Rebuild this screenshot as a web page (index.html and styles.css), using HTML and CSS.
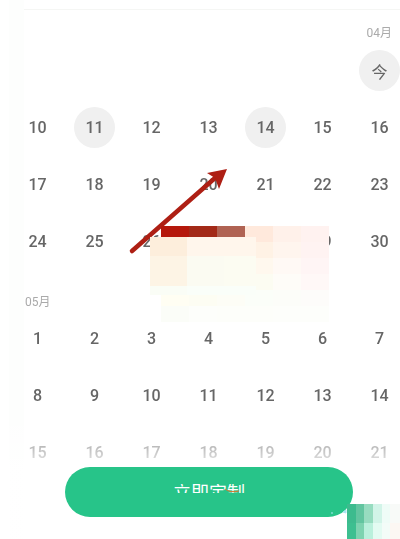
FILE: index.html
```html
<!DOCTYPE html>
<html lang="zh">
<head>
<meta charset="utf-8">
<title>日历</title>
<link rel="stylesheet" href="styles.css">
</head>
<body>
<div class="page">
  <div class="top-rule"></div>
  <section class="month april">
    <div class="month-label label-right">04月</div>
    <div class="days">
      <div class="day start-sun"><span class="mark today">今</span></div>
      <div class="day">10</div>
      <div class="day"><span class="mark">11</span></div>
      <div class="day">12</div>
      <div class="day">13</div>
      <div class="day"><span class="mark">14</span></div>
      <div class="day">15</div>
      <div class="day">16</div>
      <div class="day">17</div>
      <div class="day">18</div>
      <div class="day">19</div>
      <div class="day">20</div>
      <div class="day">21</div>
      <div class="day">22</div>
      <div class="day">23</div>
      <div class="day">24</div>
      <div class="day">25</div>
      <div class="day">26</div>
      <div class="day">27</div>
      <div class="day">28</div>
      <div class="day">29</div>
      <div class="day">30</div>
    </div>
  </section>
  <section class="month may">
    <div class="month-label">05月</div>
    <div class="days">
      <div class="day">1</div>
      <div class="day">2</div>
      <div class="day">3</div>
      <div class="day">4</div>
      <div class="day">5</div>
      <div class="day">6</div>
      <div class="day">7</div>
      <div class="day">8</div>
      <div class="day">9</div>
      <div class="day">10</div>
      <div class="day">11</div>
      <div class="day">12</div>
      <div class="day">13</div>
      <div class="day">14</div>
      <div class="day">15</div>
      <div class="day">16</div>
      <div class="day">17</div>
      <div class="day">18</div>
      <div class="day">19</div>
      <div class="day">20</div>
      <div class="day">21</div>
    </div>
  </section>

  <svg class="arrow" viewBox="0 0 110 95" aria-hidden="true">
    <path class="arrow-shaft" d="M4 85 L87 12"/>
    <path class="arrow-head" d="M99 3 L79 7 L87 12 L91 23 Z"/>
  </svg>

  <div class="mosaic mosaic-back">
    <i class="a1"></i><i class="a2"></i><i class="a3"></i><i class="a4"></i><i class="a5"></i><i class="a6"></i>
    <i class="blank"></i><i class="blank"></i><i class="blank"></i><i class="b4"></i><i class="b5"></i><i class="b6"></i>
    <i class="blank"></i><i class="blank"></i><i class="blank"></i><i class="c4"></i><i class="c5"></i><i class="c6"></i>
    <i class="blank"></i><i class="blank"></i><i class="blank"></i><i class="d4"></i><i class="d5"></i><i class="d6"></i>
    <i class="e1"></i><i class="e2"></i><i class="e3"></i><i class="e4"></i><i class="e5"></i><i class="e6"></i>
    <i class="f1"></i><i class="f2"></i><i class="f3"></i><i class="f4"></i><i class="f5"></i><i class="f6"></i>
  </div>
  <div class="mosaic mosaic-front">
    <i class="g1"></i><i class="g2"></i><i class="g3"></i>
    <i class="h1"></i><i class="h2"></i><i class="h3"></i>
    <i class="j1"></i><i class="j2"></i><i class="j3"></i>
  </div>

  <div class="footer">
    <button class="cta" type="button">
      <span class="cta-text">立即定制</span>
      <svg class="cta-marks" viewBox="0 0 288 50" aria-hidden="true">
        <path class="mark-orange" d="M160 22 Q165 26 174 24"/>
        <path class="mark-blue" d="M266 46 h2 M278 45 l3 -2 v3 z"/>
      </svg>
    </button>
  </div>

  <div class="mosaic mosaic-corner">
    <i class="k1"></i><i class="k2"></i><i class="k3"></i><i class="k4"></i><i class="k5"></i><i class="k6"></i>
    <i class="l1"></i><i class="l2"></i><i class="l3"></i><i class="l4"></i><i class="l5"></i><i class="l6"></i>
  </div>
</div>
</body>
</html>
```
FILE: styles.css
```css
* { box-sizing: border-box; }
html, body { margin: 0; padding: 0; background: #fff; }
.page {
  position: relative;
  width: 400px;
  height: 539px;
  overflow: hidden;
  padding: 9px 0 0 9px;
  background: linear-gradient(to right, #fff 9px, #fdfefd 9px, #fdfefd 24px, #fff 24px);
  font-family: Roboto, "Noto Sans CJK SC", sans-serif;
}
.top-rule { height: 1px; margin-left: 15px; background: #f5f6f4; }
.month-label {
  height: 16px;
  font-size: 12px;
  line-height: 16px;
  color: #aaa;
  filter: blur(.3px);
}
.april { padding-top: 15px; width: 399px; }
.april .month-label { margin-bottom: 1px; }
.label-right { text-align: right; padding-right: 16px; }
.may { margin-top: 24px; width: 399px; }
.may .month-label { padding-left: 16px; margin-bottom: 0; }
.days {
  display: grid;
  grid-template-columns: repeat(7, 57px);
  grid-auto-rows: 57px;
  filter: blur(.3px);
}
.day {
  display: flex;
  align-items: center;
  justify-content: center;
  font-size: 16px;
  font-weight: 500;
  color: #666;
}
.start-sun { grid-column-start: 7; }
.mark {
  display: flex;
  align-items: center;
  justify-content: center;
  width: 41px;
  height: 41px;
  border-radius: 50%;
  background: #f0f0f0;
}
.today { font-weight: 400; }
.arrow {
  position: absolute;
  left: 128px;
  top: 166px;
  width: 110px;
  height: 95px;
}
.arrow-shaft { fill: none; stroke: #ae1f14; stroke-width: 4.5; stroke-linecap: round; }
.arrow-head { fill: #ae1f14; }

.mosaic { position: absolute; display: grid; }
.mosaic-back {
  left: 161px;
  top: 226px;
  grid-template-columns: repeat(6, 28px);
  grid-auto-rows: 16px;
}
.mosaic-front {
  left: 150px;
  top: 237px;
  grid-template-columns: 37px 37px 32px;
  grid-template-rows: 19px 30px 9px;
}
.mosaic-corner {
  left: 347px;
  top: 504px;
  grid-template-columns: 9px 8px 9px 9px 8px 10px;
  grid-template-rows: 19px 16px;
}
.blank { background: #fff7ec; }
.a1 { background: #b5180c; } .a2 { background: #a32a18; } .a3 { background: #b06353; }
.a4 { background: #ffe9dc; } .a5 { background: #fff1ea; } .a6 { background: #fff2f0; }
.b4 { background: #fff2e5; } .b5 { background: #fff5ee; } .b6 { background: #fff3f2; }
.c4 { background: #fff8ee; } .c5 { background: #fff9f5; } .c6 { background: #fff5f5; }
.d4 { background: #fcfcf2; } .d5 { background: #fefcf8; } .d6 { background: #fff8f7; }
.e1 { background: #fffef3; } .e2 { background: #fdfdf3; } .e3 { background: #fdfdf6; }
.e4 { background: #fbfef9; } .e5 { background: #fcfdf9; } .e6 { background: #fdfcfa; }
.f1 { background: #fbfdf8; } .f2 { background: #fdfefb; } .f3 { background: #fdfefa; }
.f4 { background: #fdfefa; } .f5 { background: #fdfefb; } .f6 { background: #fdfefb; }
.g1 { background: #fdeedc; } .g2 { background: #fff6ec; } .g3 { background: #fff6ec; }
.h1 { background: #fdf4e5; } .h2 { background: #fbfbf2; } .h3 { background: #fcfcf2; }
.j1 { background: #fafdf6; } .j2 { background: #fafef9; } .j3 { background: #fafef9; }
.k1 { background: #3dbb8e; } .k2 { background: #62c5a0; } .k3 { background: #97dcc0; }
.k4 { background: #d2f4e8; } .k5 { background: #effcf7; } .k6 { background: #f8faf8; }
.l1 { background: #3dbf90; } .l2 { background: #7dd3b0; } .l3 { background: #baf0dc; }
.l4 { background: #e3fbf2; } .l5 { background: #f3fcf8; } .l6 { background: #fcf7f3; }

.footer {
  position: absolute;
  left: 0;
  right: 0;
  bottom: 0;
  height: 129px;
  padding: 57px 0 0 65px;
  background: linear-gradient(to bottom, rgba(255,255,255,0), rgba(255,255,255,.92) 60px);
}
.cta {
  position: relative;
  display: flex;
  align-items: flex-start;
  justify-content: center;
  width: 288px;
  height: 50px;
  padding: 17px 0 0;
  border: 0;
  border-radius: 25px;
  background: #27c489;
  font-family: inherit;
}
.cta-text {
  display: block;
  height: 9px;
  overflow: hidden;
  font-size: 18px;
  line-height: 18px;
  color: #fff;
  text-align: center;
}
.cta-marks { position: absolute; left: 0; top: 0; width: 288px; height: 50px; }
.mark-orange { fill: none; stroke: #d9772e; stroke-width: 1; }
.mark-blue { fill: #a8e4f0; stroke: #a8e4f0; stroke-width: 1; }
```
